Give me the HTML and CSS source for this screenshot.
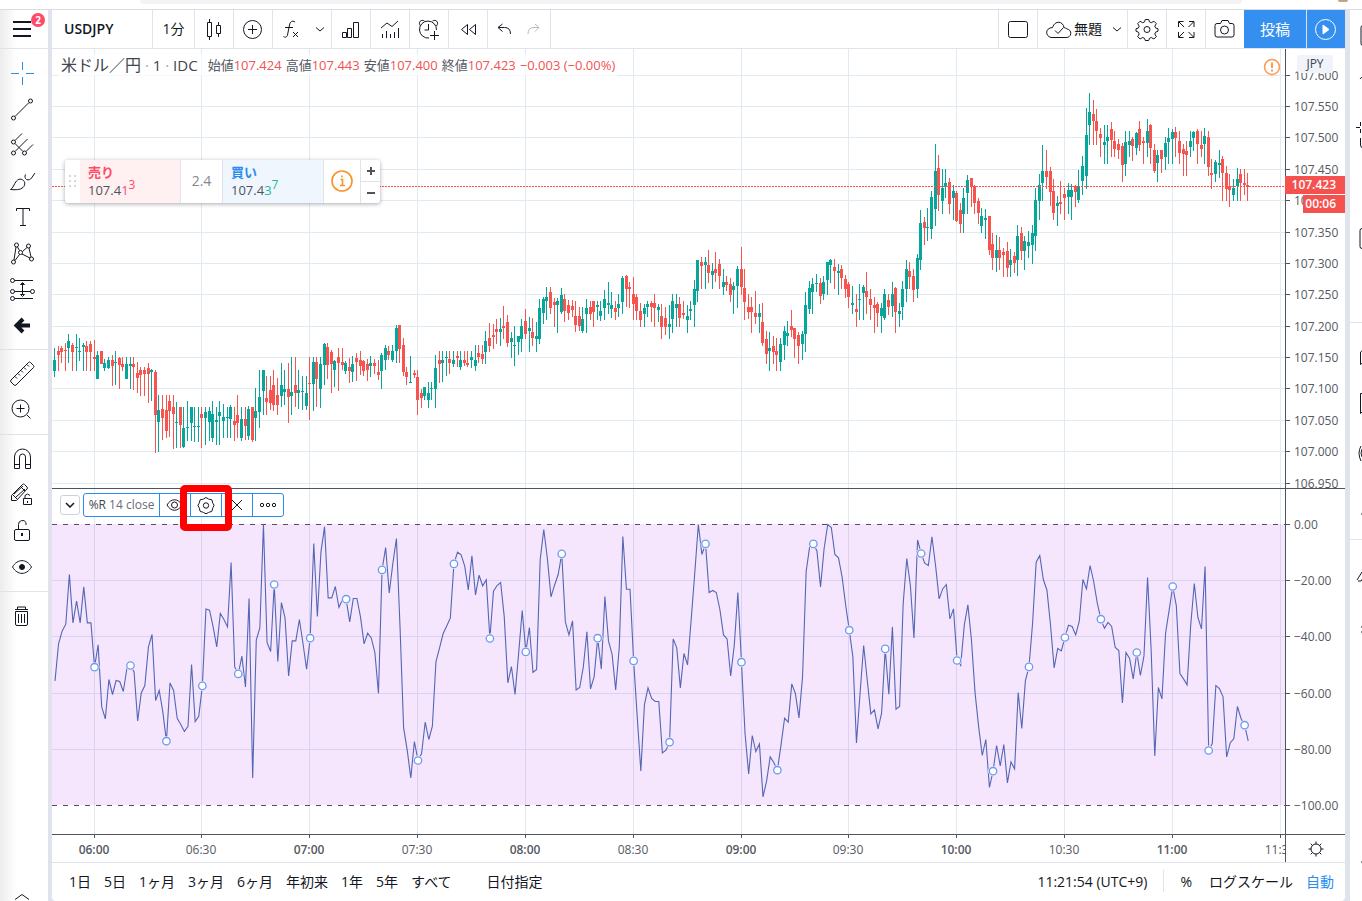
FILE: index.html
```html
<!DOCTYPE html>
<html lang="ja">
<head>
<meta charset="utf-8">
<meta name="viewport" content="width=device-width, initial-scale=1">
<title>USDJPY</title>
<link rel="stylesheet" href="styles.css">
</head>
<body>
<div class="browser-strip"><div class="address-bar"></div><span class="extension"></span></div>
<div class="app">
  <aside class="tools">
    <div class="menu">
      <button class="icon-btn" aria-label="メニュー"><svg width="20" height="16" viewBox="0 0 20 16"><path d="M1 1h18M1 8h18M1 15h18" stroke-width="2"/></svg></button>
      <span class="badge">2</span>
    </div>
    <div class="tool-group">
      <button class="tool blue" aria-label="十字線"><svg viewBox="0 0 28 28"><path d="M14.5 3v8M14.5 18v8M3 14.500h8M18 14.500h8"/></svg></button>
      <button class="tool" aria-label="トレンドライン"><svg viewBox="0 0 28 28"><circle cx="5.500" cy="23" r="2"/><circle cx="22.500" cy="6" r="2"/><path d="M7 21.500L21 7.500"/></svg></button>
      <button class="tool" aria-label="ピッチフォーク"><svg viewBox="0 0 28 28"><circle cx="5.500" cy="11" r="2"/><circle cx="5.500" cy="22" r="2"/><circle cx="16.500" cy="22" r="2"/><path d="M7 9.500l7-7M7 20.500L19.500 8M18 20.500l7-7M7 12.500l8 8"/></svg></button>
      <button class="tool" aria-label="ブラシ"><svg viewBox="0 0 28 28"><path d="M2.500 22.500c3-1.500 3-5 6-8.500 2-2.300 5-2.500 7-.500s1.500 5-.500 7c-2.500 2.500-8 2.500-12.500 2zM17.500 7.500c-1 2-.500 4 1 5 2 1 4 0 5-1.500l3.500-5"/></svg></button>
      <button class="tool" aria-label="テキスト"><svg viewBox="0 0 28 28"><path d="M8.500 8V5.500h13V8M15 5.500v17M12 22.500h6"/></svg></button>
      <button class="tool" aria-label="パターン"><svg viewBox="0 0 28 28"><circle cx="5.500" cy="23" r="2"/><circle cx="8.500" cy="6" r="2"/><circle cx="12.500" cy="13.500" r="2"/><circle cx="20.500" cy="7" r="2"/><circle cx="23.500" cy="20" r="2"/><path d="M6 21l2-13M9.500 8l2 3.500M14.500 12.500l4.500-4M21 9l2 9M14 15l8 4M7 21.500l4.500-6"/></svg></button>
      <button class="tool" aria-label="予測と計測"><svg viewBox="0 0 28 28"><circle cx="4.500" cy="5.500" r="2"/><circle cx="4.500" cy="16.500" r="2"/><circle cx="24.500" cy="16.500" r="2"/><circle cx="4.500" cy="23.500" r="2"/><path d="M6.500 5.500H25M6.500 16.500h16M6.500 23.500H25M14.500 8v12M12.500 9.500l2-2 2 2zM12.500 19.500l2 2 2-2z"/></svg></button>
      <button class="tool" aria-label="矢印"><svg viewBox="0 0 28 28"><path d="M22 14.500H9M15 8l-6.500 6.500L15 21" stroke-width="4"/></svg></button>
    </div>
    <div class="tool-group">
      <button class="tool" aria-label="メジャー"><svg viewBox="0 0 28 28"><path d="M3 20L20.500 2.500q1-1 2 0l3 3q1 1 0 2L8 25q-1 1-2 0l-3-3q-1-1 0-2zM7 16.500l2 2M10 13.500l2 2M13 10.500l2 2M16 7.500l2 2M19 4.500l2 2"/></svg></button>
      <button class="tool" aria-label="ズームイン"><svg viewBox="0 0 28 28"><circle cx="12.500" cy="12.500" r="8.500"/><path d="M19 19l3.500 3.500M12.500 8.500v8M8.500 12.500h8"/></svg></button>
    </div>
    <div class="tool-group">
      <button class="tool" aria-label="マグネット"><svg viewBox="0 0 28 28"><path d="M6.500 23.500V12a8 8 0 0 1 16 0v11.500h-5V12a3 3 0 0 0-6 0v11.500zM6.500 19.500h5M17.500 19.500h5"/></svg></button>
      <button class="tool" aria-label="描画モードを維持"><svg viewBox="0 0 28 28"><path d="M3.500 19.500v-5L14.500 3.500q1-1 2 0l2.500 2.500q1 1 0 2L8.500 19.500zM12.500 5.500l4.500 4.500M5 14l4 4M6 13l9-8M8 16l9-8M15.500 17.500h8v6h-8zM17 17v-2.500q2.500-3 5 0M19.500 20v2"/></svg></button>
      <button class="tool" aria-label="ロック"><svg viewBox="0 0 28 28"><rect x="6.500" y="12.500" width="15" height="11" rx="1.500"/><path d="M10.500 12V7.500a4 4 0 0 1 7.500-2V8"/><path d="M14 16v3" stroke-width="2"/></svg></button>
      <button class="tool" aria-label="表示"><svg viewBox="0 0 28 28"><path d="M4.500 14c5-8.500 14-8.500 19 0-5 8.500-14 8.500-19 0z"/><circle cx="14" cy="14" r="2.500" class="solid"/></svg></button>
    </div>
    <div class="tool-group last">
      <button class="tool" aria-label="削除"><svg viewBox="0 0 28 28"><path d="M7 7.500h13M9.500 7V5h8v2M7.500 9.500v12.500q0 1.500 1.500 1.500h9q1.500 0 1.500-1.500V9.500zM10.500 12v9M13.500 12v9M16.500 12v9"/></svg></button>
    </div>
    <button class="more" aria-label="下へ"><svg width="14" height="8" viewBox="0 0 14 8"><path d="M0 6.500l7-5 7 5"/></svg></button>
  </aside>

  <main class="center">
    <header class="topbar">
      <button class="symbol">USDJPY</button>
      <button class="cell interval">1分</button>
      <button class="cell" aria-label="ローソク足"><svg viewBox="0 0 28 28"><path d="M7.500 7.500h4v14h-4zM9.500 4v3.500M9.500 21.500V25M16.500 10.500h4v8h-4zM18.500 7v3.500M18.500 18.500V22"/></svg></button>
      <button class="cell" aria-label="比較"><svg viewBox="0 0 28 28"><circle cx="13.500" cy="14.500" r="9"/><path d="M13.500 10v9M9 14.500h9"/></svg></button>
      <div class="cell split"><button class="plain" aria-label="インジケーター"><svg viewBox="0 0 28 28"><path d="M19 7c-3-2-5 0-5.500 3l-2 10c-.5 2-2 3-4 1.500M9 12.500h8M17 17l5 5M22 17l-5 5"/></svg></button><button class="plain small" aria-label="お気に入り"><svg class="chev" viewBox="0 0 8 5"><path d="M0 .500l4 3.500 4-3.500"/></svg></button></div>
      <button class="cell" aria-label="財務"><svg viewBox="0 0 28 28"><path d="M5.500 17.500h4v5h-4zM10.500 13.500h4v9h-4zM16.500 7.500h5v15h-5z"/></svg></button>
      <button class="cell" aria-label="テンプレート"><svg viewBox="0 0 28 28"><path d="M5 13l6-5 5 3.500L22 6M6.500 23v-4M10.500 23v-7M14.500 23v-4M18.500 23v-6M22.500 23V13"/></svg></button>
      <button class="cell" aria-label="アラート"><svg viewBox="0 0 28 28"><path d="M14 23a8.500 8.500 0 1 1 7.500-8M13.500 9v6h-4M5.500 11C2.500 7 6.500 4 9.500 6M17.500 6c3-2 7 1 4 5M19.500 16v9M15 20.500h9"/></svg></button>
      <button class="cell" aria-label="リプレイ"><svg viewBox="0 0 28 28"><path d="M13.500 9.500v10l-6-5zM21.500 9.500v10l-6-5z"/></svg></button>
      <div class="cell history"><button class="plain" aria-label="元に戻す"><svg viewBox="0 0 28 28"><path d="M11.500 9L7 12.500l4.500 4M7.500 12.500h6q6 0 6 6.500"/></svg></button><button class="plain faded" aria-label="やり直す"><svg viewBox="0 0 28 28"><path d="M16 9l4 3.500-4 4M20 12.500h-5q-6 0-6 6.500"/></svg></button></div>
      <span class="spacer"></span>
      <button class="cell left" aria-label="レイアウト"><svg viewBox="0 0 28 28"><rect x="4.500" y="6.500" width="19" height="16" rx="2"/></svg></button>
      <button class="cell layout"><svg viewBox="0 0 28 28"><path d="M7 22.500h15a4 4 0 0 0 1-8.500c-1-1-2-1-3-1.500C19 6 11 5 8.500 12.500 1 13 1 21 7 22.500zM11 15.500l3 3 5.500-6"/></svg><span>無題</span><svg class="chev" viewBox="0 0 8 5"><path d="M0 .500l4 3.500 4-3.500"/></svg></button>
      <button class="cell" aria-label="設定"><svg viewBox="0 0 28 28"><g transform="translate(0 -1)"><path d="M12.300 5.500h3.400l.8 2.400 1.800.8 2.600-1.500 2.400 2.400-1.500 2.600.8 1.800 2.400.8v2.400l-2.400 1-.8 1.800 1.500 2.600-2.400 2.400-2.600-1.500-1.800.8-.8 2.200h-3.400l-.8-2.200-1.800-.8-2.600 1.500-2.400-2.400 1.500-2.600-.8-1.800-2.400-1v-2.400l2.400-.8.8-1.800-1.500-2.600 2.400-2.400 2.600 1.500 1.800-.8z"/><circle cx="14" cy="15.500" r="3"/></g></svg></button>
      <button class="cell" aria-label="全画面"><svg viewBox="0 0 28 28"><path d="M6.500 12V6.500h5M17 6.500h5V12M22 17v5.500h-5M11.500 22.500h-5V17M7 7l5 5M21.500 7l-5 5M21.500 22l-5-5M7 22l5-5"/></svg></button>
      <button class="cell no-line" aria-label="スナップショット"><svg viewBox="0 0 28 28"><path d="M6 8.500h3.500l1.500-3h6l1.500 3H21q2 0 2 2V20q0 2-2 2H6q-2 0-2-2v-9.500q0-2 2-2z"/><circle cx="13.500" cy="15" r="4"/></svg></button>
      <button class="publish">投稿</button>
      <button class="play" aria-label="配信"><svg viewBox="0 0 28 28"><circle cx="13.500" cy="14.500" r="10"/><path d="M11 10l6 4.500-6 4.500z" class="solid"/></svg></button>
    </header>

    <section class="chart">
      <div class="pane">
        <svg id="price" class="plot"></svg>
        <div class="legend">
          <span class="name">米ドル／円<small> <i>·</i> 1 <i>·</i> IDC</small></span>
          <span>始値<b>107.424</b></span><span>高値<b>107.443</b></span><span>安値<b>107.400</b></span><span>終値<b>107.423</b></span><span><b>−0.003 (−0.00%)</b></span>
        </div>
        <svg class="warning" viewBox="0 0 18 18"><circle cx="9" cy="9" r="7.500"/><path d="M9 4.500v5.500M9 11.500v2" stroke-width="2"/></svg>
        <div class="ticket">
          <span class="grip"><svg width="8" height="14" viewBox="0 0 8 14"><path d="M0 1h2M5 1h2M0 6h2M5 6h2M0 11h2M5 11h2" stroke-width="2"/></svg></span>
          <button class="side sell"><strong>売り</strong><span>107.4<em>1</em><sup>3</sup></span></button>
          <span class="spread">2.4</span>
          <button class="side buy"><strong>買い</strong><span>107.4<em>3</em><sup>7</sup></span></button>
          <button class="info" aria-label="情報"><svg viewBox="0 0 24 24"><circle cx="12" cy="11" r="10"/><path d="M10.500 9.500h2v6M10 15.500h5M12 5.500v2"/></svg></button>
          <span class="steps"><button aria-label="増やす"><svg width="8" height="8" viewBox="0 0 8 8"><path d="M0 4h8M4 0v8" stroke-width="2"/></svg></button><button aria-label="減らす"><svg width="8" height="8" viewBox="0 0 8 8"><path d="M0 4h8" stroke-width="2"/></svg></button></span>
        </div>
      </div>
      <div class="axis">
        <svg id="priceAxis" class="plot"></svg>
        <span class="currency">JPY</span>
        <div class="last-price"><span class="tag">107.423</span><span class="tag timer">00:06</span></div>
      </div>
      <div class="pane line-top">
        <svg id="range" class="plot"></svg>
        <div class="study">
          <button class="fold" aria-label="折りたたむ"><svg width="10" height="6" viewBox="0 0 10 6"><path d="M1 1l4 4 4-4" stroke-width="1.500"/></svg></button>
          <div class="study-box">
            <span class="study-name">%R <i>14 close</i></span>
            <button aria-label="非表示"><svg viewBox="0 0 18 18"><path d="M1 9c4-7 11-7 15 0-4 7-11 7-15 0z"/><circle cx="8.500" cy="9" r="3"/></svg></button>
            <button class="marked" aria-label="設定"><svg viewBox="0 0 18 18"><path d="M6.500 3q2.500-3 5 0 .5.400 1.500.400 2.500-.4 2.500 2.600 0 1 .500 1.500 2.200 1.500 0 4-.5.500-.5 1.500 0 3-2.500 3-1 0-1.500.5-2.500 2.500-5 0-.5-.5-1.500-.5-2.500 0-2.500-3 0-1-.5-1.500-2.200-2.500 0-4 .5-.5.500-1.500 0-3 2.500-2.600 1 0 1.500-.4z"/><circle cx="9" cy="9.500" r="2.700"/></svg></button>
            <button aria-label="削除"><svg viewBox="0 0 18 18"><path d="M4 4l10 10M14 4L4 14"/></svg></button>
            <button aria-label="その他"><svg viewBox="0 0 18 18"><circle cx="3" cy="9" r="1.700"/><circle cx="9" cy="9" r="1.700"/><circle cx="15" cy="9" r="1.700"/></svg></button>
          </div>
        </div>
      </div>
      <div class="axis line-top"><svg id="rangeAxis" class="plot"></svg></div>
      <div class="times"><svg id="timeAxis" class="plot"></svg></div>
      <button class="axis-settings" aria-label="軸の設定"><svg viewBox="0 0 18 18"><circle cx="9" cy="9" r="5"/><path d="M9 1.500V4M9 14v2.500M1.500 9H4M14 9h2.500M3.700 3.700l1.800 1.800M12.500 12.500l1.800 1.800M3.700 14.300l1.800-1.800M12.500 5.500l1.800-1.800"/></svg></button>
    </section>

    <footer class="bottombar">
      <button>1日</button><button>5日</button><button>1ヶ月</button><button>3ヶ月</button><button>6ヶ月</button><button>年初来</button><button>1年</button><button>5年</button><button>すべて</button>
      <button class="goto">日付指定</button>
      <span class="spacer"></span>
      <button class="clock">11:21:54 (UTC+9)</button>
      <span class="divider"></span>
      <button class="percent">%</button><button>ログスケール</button><button class="on">自動</button>
    </footer>
  </main>

  <aside class="widgets">
    <svg width="12" height="880" viewBox="1350 10 12 880"><path d="M1366 25.500h-3q-2 0-2 2v16q0 2 2 2h3M1360 79q1-2 3-2M1356 127.500h4M1360.500 122v4M1360.500 129v4M1360.500 138v7q0 3 3 3M1364 228.500h-2q-2 0-2 2v16q0 2 2 2h2M1363 350l-2.500 2v12.500l2.500-2M1363 393.500h-2.500v20l3-3M1361 446q-4 7 0 15M1362 449q-2 4 0 8M1357 580l5-8M1358 581h3l2-3M1361 514h1M1361 627h1M1361 632h1M1361 862h1"/><path class="rule" d="M1350 322.500h12M1350 539.500h12"/></svg>
  </aside>
</div>
<script src="chart.js"></script>
</body>
</html>
```
FILE: styles.css
```css
*, *::after { box-sizing: border-box; }
body {
  margin: 0;
  height: 100vh;
  display: flex;
  flex-direction: column;
  overflow: hidden;
  background: #fff;
  color: #131722;
  font-family: "Open Sans", "Noto Sans CJK JP", sans-serif;
  font-size: 14px;
}
button {
  margin: 0;
  padding: 0;
  border: 0;
  background: none;
  color: inherit;
  font: inherit;
  display: flex;
  align-items: center;
  justify-content: center;
  white-space: nowrap;
}
svg { fill: none; stroke: currentColor; stroke-width: 1; flex: none; display: block; }
.solid { fill: currentColor; }
i, em { font-style: normal; }
.spacer { flex: 1; }

.browser-strip {
  position: relative;
  flex: none;
  height: 10px;
  padding: 0 120px 0 140px;
  border-bottom: 1px solid #dcdde0;
}
.address-bar { height: 4px; background: #f1f3f4; border-radius: 0 0 12px 12px; }
.extension { position: absolute; right: 14px; top: 0; width: 10px; height: 2px; background: #b9a58c; border-radius: 0 0 4px 4px; }

.app {
  flex: 1;
  min-height: 0;
  display: grid;
  grid-template-columns: 48px minmax(0, 1fr) 17px;
  background: #e0e3eb;
}

.tools {
  display: flex;
  flex-direction: column;
  overflow: hidden;
  background: linear-gradient(to right, #ececec, #fff 16px);
}
.menu { position: relative; flex: none; height: 39px; padding: 11px 12px; border-bottom: 1px solid #e0e3eb; }
.badge {
  position: absolute;
  left: 31px;
  top: 3px;
  width: 14px;
  height: 14px;
  border-radius: 50%;
  background: #ff4a68;
  color: #fff;
  font-size: 10px;
  font-weight: 700;
  line-height: 14px;
  text-align: center;
}
.tool-group { flex: none; padding: 6px 0; border-bottom: 1px solid #e0e3eb; }
.tool-group.last { border: 0; }
.tool { width: 44px; height: 36px; }
.tool svg { width: 28px; height: 28px; }
.blue { color: #2a8cf0; }
.more { margin-top: auto; height: 8px; width: 44px; }

.center {
  display: flex;
  flex-direction: column;
  min-width: 0;
  min-height: 0;
  margin-left: 4px;
  background: #fff;
  border-radius: 0 0 4px 4px;
}
.topbar { flex: none; display: flex; height: 39px; border-bottom: 1px solid #e0e3eb; }
.topbar svg { width: 28px; height: 28px; }
.topbar svg.chev, .chev { width: 8px; height: 5px; }
.symbol { width: 101px; padding-left: 12px; justify-content: flex-start; border-right: 1px solid #e0e3eb; font-size: 14px; font-weight: 600; }
.cell { display: flex; align-items: center; justify-content: center; width: 39px; border-right: 1px solid #e0e3eb; }
.symbol, .interval, .publish { padding-bottom: 2px; }
.cell.interval { width: 42px; }
.cell.split { width: 59px; }
.cell.history { width: 63px; }
.cell.left { width: 40px; border-left: 1px solid #e0e3eb; }
.cell.layout { width: 90px; gap: 2px; }
.cell.layout span { padding-bottom: 2px; }
.cell.layout .chev { margin-left: 9px; }
.cell.no-line { width: 38px; border-right: 0; }
.plain { width: 28px; }
.plain.small { margin-left: 8px; width: 16px; }
.faded { color: #b8bac0; }
.publish, .play { background: #348ff0; color: #fff; }
.publish { width: 62px; font-size: 15px; }
.play { width: 39px; border-left: 1px solid #e0e3eb; }

.chart {
  flex: 1;
  min-height: 0;
  display: grid;
  grid-template-columns: minmax(0, 1fr) 60px;
  grid-template-rows: minmax(0, 439fr) minmax(0, 346fr) 28px;
}
.pane, .axis, .times { position: relative; min-height: 0; }
.line-top { border-top: 1px solid #50535e; }
.plot { width: 100%; height: 100%; overflow: hidden; stroke: none; font-family: "Open Sans", sans-serif; font-size: 12px; fill: #555962; }
.plot .strong { font-weight: 600; }

.legend {
  position: absolute;
  left: 6px;
  top: 5px;
  display: flex;
  align-items: center;
  gap: 4px;
  padding: 0 3px;
  background: rgba(255, 255, 255, .7);
  color: #555962;
  font-size: 13px;
  line-height: 22px;
}
.legend .name { margin-right: 6px; font-size: 16px; color: #42454f; }
.legend small { font-size: 15px; }
.legend .name i { color: #a0a3ab; }
.legend b { font-weight: 400; color: #f05350; }
.warning { position: absolute; right: 4px; top: 9px; width: 18px; height: 18px; color: #ff9850; stroke-width: 1.5; }

.ticket {
  position: absolute;
  left: 13px;
  top: 111px;
  display: flex;
  height: 43px;
  background: #fff;
  border-radius: 3px;
  box-shadow: 0 1px 4px rgba(60, 64, 80, .45);
  color: #50535e;
}
.grip { width: 15px; padding: 15px 4px; color: #d5d7dd; }
.side { width: 100px; padding: 2px 8px 4px; flex-direction: column; align-items: flex-start; justify-content: center; line-height: 18px; font-size: 13px; }
.side strong { font-weight: 700; }
.side sup { font-size: 12px; line-height: 0; vertical-align: 6px; }
.sell { background: #fff0f2; }
.sell strong, .sell em, .sell sup { color: #ff4a68; }
.buy { background: #f0f6fe; }
.buy strong { color: #2a8cf0; }
.buy em, .buy sup { color: #22b999; }
.spread { width: 43px; border: solid #e0e3eb; border-width: 0 1px; color: #858892; line-height: 41px; text-align: center; }
.info { width: 38px; border: solid #e0e3eb; border-width: 0 1px; color: #f7932a; }
.info svg { width: 24px; height: 24px; stroke-width: 1.600; }
.steps { display: flex; flex-direction: column; width: 19px; }
.steps button { flex: 1; }
.steps button + button { border-top: 1px solid #e0e3eb; }

.currency {
  position: absolute;
  left: 12px;
  top: 6px;
  width: 36px;
  border-radius: 3px;
  background: #f0f3fa;
  color: #42454f;
  font-size: 12px;
  line-height: 18px;
  text-align: center;
}
.last-price { position: absolute; left: 0; right: 0; top: 127px; display: flex; flex-direction: column; align-items: flex-end; gap: 1px; }
.tag { width: 60px; padding-right: 9px; background: #f5524f; color: #fff; font-size: 12px; font-weight: 600; line-height: 18px; text-align: right; }
.tag.timer { width: 42px; }

.study { position: absolute; left: 8px; top: 4px; display: flex; align-items: center; gap: 3px; }
.fold { width: 20px; height: 20px; border: 1px solid #cfd2da; border-radius: 3px; background: #fff; }
.study-box { display: flex; height: 24px; border: 1px solid #2a8cf0; border-radius: 3px; background: #fff; }
.study-name { width: 75px; line-height: 22px; text-align: center; font-size: 12px; color: #42454f; white-space: nowrap; }
.study-name i { color: #6a6d78; }
.study-box button { position: relative; width: 31px; border-left: 1px solid #2a8cf0; }
.study-box svg { width: 18px; height: 18px; }
.marked::after {
  content: "";
  position: absolute;
  z-index: 1;
  left: -11px;
  top: -9px;
  width: 52px;
  height: 46px;
  border: 7px solid #f00;
  border-radius: 5px;
}

.times { border-top: 1px solid #50535e; }
.axis-settings { border: solid #50535e; border-width: 1px 0 0 1px; }
.axis-settings svg { width: 18px; height: 18px; }

.bottombar {
  flex: none;
  display: flex;
  align-items: center;
  gap: 13px;
  height: 39px;
  padding: 0 11px 2px 17px;
  border-top: 1px solid #e0e3eb;
}
.goto { margin-left: 22px; }
.divider { width: 1px; height: 22px; margin: 0 3px; background: #e0e3eb; }
.percent { padding-right: 4px; }
.on { color: #2a8cf0; }

.widgets { margin-left: 5px; background: #fff; overflow: hidden; }
.rule { stroke: #e0e3eb; }
```
FILE: chart.js
```js
// One bar per minute from 05:49. Each bar is colour, high, body top, body
// bottom, low, in thirds of a unit below the base line of its block.
const blocks = [
  { base: 310, bars: `g115,150,182,201 r109,123,135,184 r108,114,126,158 r98,121,123,184 g72,93,114,160 r99,104,126,182 g72,110,112,182 g84,123,125,154 g99,104,112,182 r94,108,126,182 r93,102,126,182 r90,140,147,182 g123,135,207,207 r123,123,162,162 g147,160,174,182 g141,150,174,177 r135,150,168,227 g123,155,157,225 r142,145,165,236 r140,162,171,184 g142,163,207,207 g142,162,168,237 r142,162,171,240 r156,188,204,248 r172,181,194,258 r172,180,192,257 r160,175,192,278 g178,181,186,273 r180,186,315,429 g255,300,335,426 r255,297,324,390 r255,299,363,383 r255,273,303,380 r255,291,312,417 g275,335,338,413 r291,291,345,413 g291,354,411,413 g273,350,353,392 g291,291,339,392 g291,347,350,395 g291,347,350,395 r291,312,324,413 g291,306,324,405 g291,303,336,393 g273,312,384,395 g291,330,336,404 g273,306,318,404 g283,320,332,383 g291,322,325,383 g285,291,326,383 r291,333,345,392 r255,315,339,383 g291,326,383,392 r291,326,348,390 g288,297,378,390 r291,291,390,395 g234,303,324,393 g180,261,306,354 g180,180,243,315 r198,264,276,315 r198,240,279,300 r180,225,285,303 r204,255,285,315 g159,225,258,291 g180,237,246,285 r159,237,260,339 g142,246,258,315 r142,225,249,291 g180,240,249,297 g198,244,247,300 g198,249,288,300 r141,219,222,330 g142,156,222,303 r142,156,207,291 g142,162,237,294 g99,102,165,225 r99,111,165,207 r120,126,162,249 g150,154,180,230 r114,142,158,243 r114,156,165,180 g153,160,183,192 r144,171,183,219 g138,162,186,216 r129,144,156,213 r123,150,168,195 r150,154,183,198 r147,163,180,213 g138,160,168,201 r147,160,168,192 r150,186,195,210 g129,135,183,237 g105,114,150,180 r108,123,135,150 g105,123,150,156 g45,54,123,160 r45,45,117,160 r84,105,186,198 r171,186,201,225 g138,215,218,218 r180,189,195,204 r180,201,270,315 r236,249,264,294 g230,231,258,270 g216,249,270,294 g216,234,237,270 g136,174,237,294 r123,150,162,219 g123,150,159,216 g123,141,145,198 r123,147,160,192 g123,150,162,171 r123,138,144,171 g123,150,171,180 r123,150,158,168 r123,159,165,171` },
  { base: 240, bars: `g333,350,360,384 g315,360,378,393 r315,339,351,369 r315,342,357,372 g273,303,336,372 r249,294,318,336 r252,285,291,327 r237,267,276,312 g234,267,276,318 r198,258,264,297 r225,246,309,321 g276,294,306,354 g258,315,318,378 g288,288,306,345 g237,258,297,336 r207,243,282,297 g231,264,273,336 r234,276,294,318 g246,288,297,336 g177,204,297,312 g171,177,219,252 g141,171,183,240 r141,156,204,222 r174,186,195,261 g174,183,195,279 g144,165,216,222 r162,177,213,246 r180,195,219,240 r180,198,210,231 r183,228,255,276 r201,228,258,273 g201,237,273,279 g177,204,222,279 r183,201,222,240 r183,183,216,261 g183,195,201,240 g183,213,228,243 g150,177,204,240 g126,189,195,222 g156,195,207,234 r183,204,216,240 g162,192,204,231 g108,114,186,222 r105,108,147,201 r126,141,147,204 r111,162,192,240 r162,171,213,240 r189,213,240,261 g192,204,222,261 g183,192,201,231 r183,189,201,246 r162,189,204,261 g192,201,210,246 r192,228,261,297 r201,234,261,285 g195,252,261,297 g162,183,237,279 g162,192,204,261 r171,192,234,261 r183,219,225,237 g195,228,240,279 g183,207,213,240 g120,147,195,261 g60,60,153,186 r51,66,78,147 g51,66,75,147 r30,75,99,129 g69,93,105,147 r36,87,99,126 r57,72,108,147 g87,126,141,165 r108,126,135,153 r114,132,165,186 g126,138,150,222 g78,87,138,204 r21,87,141,165 r87,144,186,240 r162,201,216,237 r171,201,216,279 r153,219,231,252 g192,219,231,279 r189,246,309,318 r273,297,342,372 g276,324,333,393 r288,318,336,372 r294,333,345,393 g294,312,366,393 g258,273,315,360 g243,279,288,318 r210,258,270,291 r264,264,297,354 r276,285,318,372 g273,282,312,360 g156,195,282,336 g123,144,207,222 g114,132,156,222 g102,129,132,157 r114,129,168,192 g108,126,162,180 g66,66,120,165 g57,60,75,129 r57,81,93,147 g72,93,99,165 r75,87,114,147 r105,117,147,174 r126,132,171,204 g138,189,195,222 r162,207,216,261` },
  { base: 80, bars: `g612,657,660,720 g615,621,639,720 r576,633,651,702 r627,657,675,720 r651,675,684,759 r666,672,699,741 g669,684,708,759 g627,642,714,720 r642,660,681,705 g606,642,678,711 r621,624,696,759 g669,693,702,741 g603,627,681,720 g540,567,627,666 r546,573,591,627 r567,588,630,666 g522,534,627,654 g390,429,540,570 r411,426,444,495 g384,441,444,483 g333,351,447,477 g192,273,387,438 r225,264,345,393 g267,324,363,402 g267,309,318,354 r294,306,372,402 g315,333,354,420 r333,339,423,426 r369,390,432,459 g324,354,402,459 g285,300,339,402 r294,294,321,381 r315,318,369,402 r354,363,399,432 g384,408,438,459 g387,414,420,477 r408,408,510,525 r459,492,534,570 g465,510,534,576 r471,510,534,570 r504,516,525,591 r486,513,564,591 g507,540,555,591 r516,528,549,579 g435,468,540,588 r441,459,513,540 g468,483,513,570 g453,486,498,534 g435,459,495,552 g324,360,468,513 g282,315,363,420 g195,273,309,363 r210,273,291,327 r261,273,336,378 r297,333,399,420 g348,369,378,438 r303,366,372,402 r324,342,354,420 g309,330,351,402 g312,330,351,420 r315,318,336,381 g270,318,360,369 g228,258,303,345 g84,165,288,327 g39,96,135,195 r60,102,123,195 r87,123,153,195 r144,162,174,231 g135,186,195,252 g135,171,183,252 r126,147,180,231 r153,183,207,231 r177,192,210,237 r189,198,255,306 g153,186,252,288 g153,183,195,231 r171,177,198,243 g156,159,204,225 r123,147,195,213 r171,183,189,252 g117,153,189,231 r132,135,204,252 r192,210,273,279 g210,225,249,306 r210,210,237,279 g171,189,231,270 g144,174,186,252 g147,156,177,252 r141,156,174,231 r153,183,219,252 r192,207,222,288 r183,213,225,288 g153,183,201,231 g153,156,174,213 r147,153,192,252 r153,195,207,231 g144,168,192,252 r153,171,261,288 r237,279,285,327 g240,246,282,306 g210,249,255,294 r228,237,279,363 r258,279,327,363 r282,318,330,381 g297,324,345,363 g264,297,318,363 r267,282,309,363 r267,309,315,345 r279,315,320,363` }
];

// %R line, same minutes, in thirds of a unit below each base.
const ranges = [
  { base: 480, values: [602,490,452,432,283,428,363,428,320,428,428,561,494,680,716,598,643,601,604,634,565,556,575,722,638,616,500,463,661,631,695,783,608,631,714,733,754,738,553,724,708,617,386,390,440,500,400,418,440,247,560,581,528,620,355,893,480,443,133,487,514,313,544,367,413,587,482,482,418,490,567,474,190,409,215,140,353,353,319,382,358,357,425,355,355,410,491,459,473,517,640,269,202,338,250,175,440,743,810,893,784,841,820,726,778,738,544,503,460,437,413,251] },
  { base: 510, values: [126,134,168,239,137,254,195,227,209,385,243,226,217,320,518,469,553,430,301,425,352,487,478,148,58,145,260,225,193,131,335,374,332,539,532,470,365,536,500,384,476,259,392,432,539,412,79,237,237,452,620,782,584,533,565,574,574,728,720,696,386,413,533,430,464,330,190,43,133,101,247,241,247,298,374,386,497,405,247,456,670,791,676,724,701,860,812,740,757,780,705,624,636,521,550,623,500,184,108,101,122,230,115,43,52,133,143,200,285,360,440,698,550,406,510,611,599,656,608,416,552,350,597,589,280,145,226,383,89,130,159,166,80,165,266,236,223,326,296,451,466,345,284,390,548,650,736,688,832,783,706,767,703,818,755,776,547,655,512,470,340,156,136,208,240,345,473,415,422,382,345,349,374,333,208,236,166,214,278,327,354,337,349,412,421,578,427,445,506,427,496,437,202,420,737,532,566,370,300,229,287,490,506,524,345,220,322,356,169,721,700,526,535,560,740,698,685,589,625,645,692] }
];

const STEP = 3.594;
const FIRST = 54.6;
const bars = blocks.flatMap(b => b.bars.split(' ').map(t => ({
  up: t[0] === 'g',
  y: t.slice(1).split(',').map(v => b.base + Math.round(v / 3))
})));
const readings = ranges.flatMap(r => r.values.map(v => r.base + v / 3 + 0.2));
const priceLines = [75, 106, 137, 169, 200, 232, 263, 294, 326, 357, 388, 420, 451, 483];
const rangeLines = [524, 580, 636, 693, 749, 805];
const times = ['06:00', '06:30', '07:00', '07:30', '08:00', '08:30', '09:00', '09:30', '10:00', '10:30', '11:00', '11:30'];

const rect = (x, y, w, h, fill) => `<rect x="${x}" y="${y}" width="${w}" height="${h}" fill="${fill}"/>`;
const timeX = i => Math.floor(FIRST + (11 + 30 * i) * STEP);

// Bars stay pinned to the right edge; heights stretch with the pane.
function paint(id, top, height, build) {
  const svg = document.getElementById(id);
  const w = svg.clientWidth, h = svg.clientHeight;
  const shift = w - 1285;
  svg.innerHTML = build(x => x + shift, y => Math.round((y - top) * h / height * 10) / 10, w, h);
}

function draw() {
  const grid = (lines, X, Y, w, h) =>
    lines.map(y => rect(0, Math.round(Y(y)), w, 1, '#dfebf0')).join('') +
    times.map((t, i) => rect(X(timeX(i)), 0, 1, h, '#dfebf0')).join('');

  paint('price', 49, 439, (X, Y, w, h) => grid(priceLines, X, Y, w, h) +
    '<g shape-rendering="crispEdges">' + bars.map((b, i) => {
      const x = X(Math.floor(FIRST + i * STEP));
      const [hi, a, z, lo] = b.y.map(Y);
      const c = b.up ? '#07a69a' : '#f7544f';
      return rect(x, hi, 1, Math.max(1, lo - hi), c) + rect(x - 1, a, 3, Math.max(1, z - a), c);
    }).join('') + '</g>' +
    `<path d="M0 ${Y(186) + 0.5}H${w}" stroke="#f5524f" stroke-dasharray="2 1"/>`);

  paint('range', 489, 345, (X, Y, w, h) => {
    const pts = readings.map((y, i) => [X(55 + i * STEP), Y(y)]);
    return grid([], X, Y, w, h) +
      rect(0, Y(524), w, Y(805) - Y(524), '#f6e6fd') +
      rangeLines.slice(1, 5).map(y => rect(0, Math.round(Y(y)), w, 1, '#d9d2f0')).join('') +
      times.map((t, i) => rect(X(timeX(i)), Y(524), 1, Y(805) - Y(524), '#d9d2f0')).join('') +
      [524, 805].map(y => `<path d="M0 ${Y(y) + 0.5}H${w}" stroke="#594a66" stroke-dasharray="5 6"/>`).join('') +
      `<polyline points="${pts.map(p => p.join()).join(' ')}" fill="none" stroke="#5367b5" stroke-width="1.1"/>` +
      pts.filter((p, i) => i > 10 && i % 10 === 1).map(p =>
        `<circle cx="${p[0]}" cy="${p[1]}" r="5" fill="#f6e6fd"/><circle cx="${p[0]}" cy="${p[1]}" r="3.7" fill="#fff" stroke="#6b9bf0" stroke-width="1.3"/>`).join('');
  });

  const scale = (lines, label, Y, h) => rect(0, 0, 1, h, '#50535e') + lines.map((y, i) =>
    rect(1, Math.round(Y(y)), 4, 1, '#50535e') + `<text x="9" y="${Y(y) + 5}">${label(i)}</text>`).join('');
  paint('priceAxis', 49, 439, (X, Y, w, h) => scale(priceLines, i => (107.6 - i * 0.05).toFixed(3), Y, h));
  paint('rangeAxis', 489, 345, (X, Y, w, h) => scale(rangeLines, i => (i ? '−' : '') + (i * 20).toFixed(2), Y, h));

  paint('timeAxis', 835, 27, (X, Y, w) => times.map((t, i) => {
    const x = X(timeX(i));
    return rect(x, 0, 1, 3, '#50535e') +
      `<text x="${x}" y="19" text-anchor="middle"${i % 2 ? '' : ' class="strong"'}>${t}</text>`;
  }).join(''));
}

draw();
addEventListener('resize', draw);
```
